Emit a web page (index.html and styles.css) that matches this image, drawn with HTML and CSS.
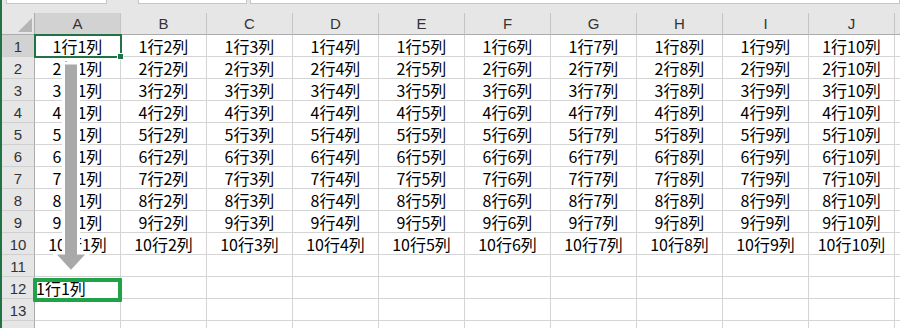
FILE: index.html
```html
<!DOCTYPE html>
<html lang="ja">
<head>
<meta charset="utf-8">
<link rel="stylesheet" href="styles.css">
</head>
<body>
<div class="app">
  <div class="topbar">
    <div class="box box1"></div>
    <div class="box box2"></div>
    <div class="box box3"></div>
  </div>
  <div class="grid">
    <div class="corner"><svg width="14" height="14" viewBox="0 0 14 14"><polygon points="14,0 14,14 0,14" fill="#b5b5b5"/></svg></div>
    <div class="ch sel">A</div><div class="ch">B</div><div class="ch">C</div><div class="ch">D</div><div class="ch">E</div><div class="ch">F</div><div class="ch">G</div><div class="ch">H</div><div class="ch">I</div><div class="ch">J</div><div class="ch fill"></div>

    <div class="rh sel">1</div><div class="c active">1行1列<span class="handle"></span></div><div class="c">1行2列</div><div class="c">1行3列</div><div class="c">1行4列</div><div class="c">1行5列</div><div class="c">1行6列</div><div class="c">1行7列</div><div class="c">1行8列</div><div class="c">1行9列</div><div class="c">1行10列</div><div class="c fill"></div>
    <div class="rh">2</div><div class="c">2行1列</div><div class="c">2行2列</div><div class="c">2行3列</div><div class="c">2行4列</div><div class="c">2行5列</div><div class="c">2行6列</div><div class="c">2行7列</div><div class="c">2行8列</div><div class="c">2行9列</div><div class="c">2行10列</div><div class="c fill"></div>
    <div class="rh">3</div><div class="c">3行1列</div><div class="c">3行2列</div><div class="c">3行3列</div><div class="c">3行4列</div><div class="c">3行5列</div><div class="c">3行6列</div><div class="c">3行7列</div><div class="c">3行8列</div><div class="c">3行9列</div><div class="c">3行10列</div><div class="c fill"></div>
    <div class="rh">4</div><div class="c">4行1列</div><div class="c">4行2列</div><div class="c">4行3列</div><div class="c">4行4列</div><div class="c">4行5列</div><div class="c">4行6列</div><div class="c">4行7列</div><div class="c">4行8列</div><div class="c">4行9列</div><div class="c">4行10列</div><div class="c fill"></div>
    <div class="rh">5</div><div class="c">5行1列</div><div class="c">5行2列</div><div class="c">5行3列</div><div class="c">5行4列</div><div class="c">5行5列</div><div class="c">5行6列</div><div class="c">5行7列</div><div class="c">5行8列</div><div class="c">5行9列</div><div class="c">5行10列</div><div class="c fill"></div>
    <div class="rh">6</div><div class="c">6行1列</div><div class="c">6行2列</div><div class="c">6行3列</div><div class="c">6行4列</div><div class="c">6行5列</div><div class="c">6行6列</div><div class="c">6行7列</div><div class="c">6行8列</div><div class="c">6行9列</div><div class="c">6行10列</div><div class="c fill"></div>
    <div class="rh">7</div><div class="c">7行1列</div><div class="c">7行2列</div><div class="c">7行3列</div><div class="c">7行4列</div><div class="c">7行5列</div><div class="c">7行6列</div><div class="c">7行7列</div><div class="c">7行8列</div><div class="c">7行9列</div><div class="c">7行10列</div><div class="c fill"></div>
    <div class="rh">8</div><div class="c">8行1列</div><div class="c">8行2列</div><div class="c">8行3列</div><div class="c">8行4列</div><div class="c">8行5列</div><div class="c">8行6列</div><div class="c">8行7列</div><div class="c">8行8列</div><div class="c">8行9列</div><div class="c">8行10列</div><div class="c fill"></div>
    <div class="rh">9</div><div class="c">9行1列</div><div class="c">9行2列</div><div class="c">9行3列</div><div class="c">9行4列</div><div class="c">9行5列</div><div class="c">9行6列</div><div class="c">9行7列</div><div class="c">9行8列</div><div class="c">9行9列</div><div class="c">9行10列</div><div class="c fill"></div>
    <div class="rh">10</div><div class="c">10行1列</div><div class="c">10行2列</div><div class="c">10行3列</div><div class="c">10行4列</div><div class="c">10行5列</div><div class="c">10行6列</div><div class="c">10行7列</div><div class="c">10行8列</div><div class="c">10行9列</div><div class="c">10行10列</div><div class="c fill"></div>
    <div class="rh">11</div><div class="c"></div><div class="c"></div><div class="c"></div><div class="c"></div><div class="c"></div><div class="c"></div><div class="c"></div><div class="c"></div><div class="c"></div><div class="c"></div><div class="c fill"></div>
    <div class="rh">12</div><div class="c left hl">1行1列</div><div class="c"></div><div class="c"></div><div class="c"></div><div class="c"></div><div class="c"></div><div class="c"></div><div class="c"></div><div class="c"></div><div class="c"></div><div class="c fill"></div>
    <div class="rh">13</div><div class="c"></div><div class="c"></div><div class="c"></div><div class="c"></div><div class="c"></div><div class="c"></div><div class="c"></div><div class="c"></div><div class="c"></div><div class="c"></div><div class="c fill"></div>
    <div class="rh"></div><div class="c"></div><div class="c"></div><div class="c"></div><div class="c"></div><div class="c"></div><div class="c"></div><div class="c"></div><div class="c"></div><div class="c"></div><div class="c"></div><div class="c fill"></div>

    <svg class="arrow" width="40" height="216" viewBox="0 0 40 216">
      <defs>
        <linearGradient id="g" x1="0" y1="0" x2="1" y2="0">
          <stop offset="0" stop-color="#cfcfcf"/>
          <stop offset="0.15" stop-color="#a9a9a9"/>
          <stop offset="0.85" stop-color="#a9a9a9"/>
          <stop offset="1" stop-color="#cfcfcf"/>
        </linearGradient>
      </defs>
      <path d="M12.5 2 H27.5 V192 H37.5 L20 211 L2.5 192 H12.5 Z" fill="url(#g)" stroke="#ffffff" stroke-width="3" stroke-linejoin="miter"/>
    </svg>
  </div>
</div>
</body>
</html>
```

FILE: styles.css
```css
body {
  margin: 0;
}

.app {
  width: 900px;
  height: 328px;
  overflow: hidden;
  background: #e6e6e6;
  border-left: 2px solid #217346;
  box-sizing: border-box;
  font-family: "Noto Sans CJK JP", sans-serif;
}

.topbar {
  height: 13px;
  display: flex;
  align-items: flex-start;
}

.box {
  height: 3px;
  background: #ffffff;
  border: 1px solid #c6c6c6;
  border-top: 0;
}

.box1 {
  margin-left: 4px;
  width: 99px;
}

.box2 {
  margin-left: 31px;
  width: 107px;
}

.box3 {
  margin-left: 3px;
  flex: 1;
}

.grid {
  position: relative;
  display: grid;
  grid-template-columns: 33px repeat(10, 86px) 1fr;
  grid-auto-rows: 22px;
  background: #ffffff;
}

.grid > div {
  box-sizing: border-box;
}

.corner {
  background: #e6e6e6;
  border-right: 1px solid #ababab;
  border-bottom: 1px solid #ababab;
  display: flex;
  align-items: flex-end;
  justify-content: flex-end;
  padding: 0 2px 2px 0;
}

.corner svg {
  display: block;
}

.ch {
  background: #e6e6e6;
  border-right: 1px solid #c4c4c4;
  border-bottom: 1px solid #ababab;
  text-align: center;
  font-family: "Liberation Sans", sans-serif;
  font-size: 15px;
  line-height: 22px;
  color: #333333;
}

.rh {
  background: #e6e6e6;
  border-right: 1px solid #ababab;
  border-bottom: 1px solid #cfcfcf;
  text-align: center;
  font-family: "Liberation Sans", sans-serif;
  font-size: 15px;
  line-height: 23px;
  color: #333333;
}

.sel {
  background: #d2d2d2;
}

.ch.fill {
  border-right: 0;
}

.c {
  border-right: 1px solid #d4d4d4;
  border-bottom: 1px solid #d4d4d4;
  text-align: center;
  font-size: 16px;
  line-height: 22px;
  color: #000000;
  white-space: nowrap;
  overflow: visible;
}

.c.fill {
  border-right: 0;
}

.c.left {
  text-align: left;
  padding-left: 1px;
}

.active {
  position: relative;
  outline: 2px solid #217346;
  outline-offset: -1px;
}

.handle {
  position: absolute;
  right: -4px;
  bottom: -4px;
  width: 5px;
  height: 5px;
  background: #217346;
  border: 1px solid #ffffff;
}

.hl {
  position: relative;
}

.hl::after {
  content: "";
  position: absolute;
  left: -2px;
  top: 1px;
  right: -2px;
  bottom: -4px;
  border: 4px solid #20a248;
  border-radius: 1px;
  pointer-events: none;
}

.arrow {
  position: absolute;
  left: 49px;
  top: 48px;
}
```
